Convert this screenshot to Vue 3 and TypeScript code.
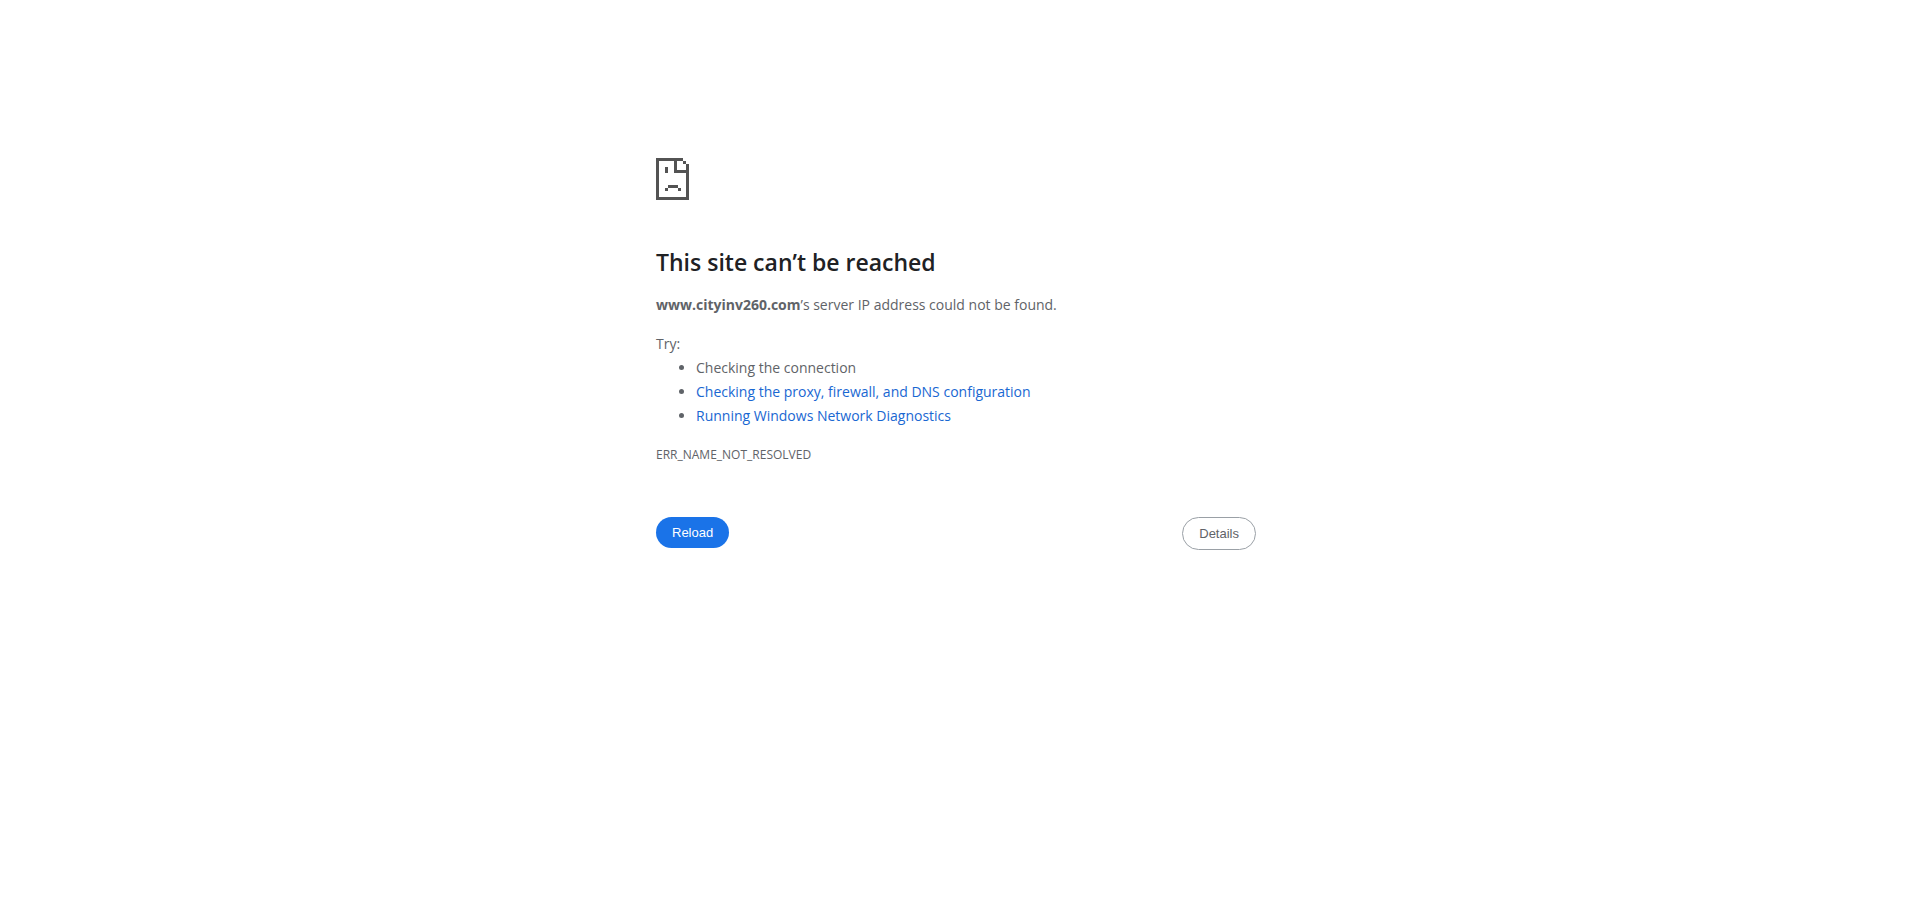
<script setup lang="ts">
import { ref } from 'vue'

interface Suggestion {
  text: string
  link: boolean
}

const host = 'www.cityinv260.com'
const errorCode = 'ERR_NAME_NOT_RESOLVED'
const suggestions: Suggestion[] = [
  { text: 'Checking the connection', link: false },
  { text: 'Checking the proxy, firewall, and DNS configuration', link: true },
  { text: 'Running Windows Network Diagnostics', link: true },
]

const showDetails = ref(false)

function reload(): void {
  window.location.reload()
}
</script>

<template>
  <main class="page">
    <svg class="icon" viewBox="0 0 33 42" shape-rendering="crispEdges" aria-hidden="true">
      <path
        d="M0 0H27V3H21V12H33V42H0ZM3 3V39H30V15H18V3ZM27 3H30V6H27ZM30 6H33V12H30ZM9 9H12V15H9ZM12 27H22V30H12ZM9 30H12V33H9ZM22 30H25V33H22Z"
        fill-rule="evenodd"
      />
    </svg>
    <h1>This site can’t be reached</h1>
    <p class="summary"><strong>{{ host }}</strong>’s server IP address could not be found.</p>
    <div class="suggestions">
      <p>Try:</p>
      <ul>
        <li v-for="item in suggestions" :key="item.text">
          <a v-if="item.link" href="#" @click.prevent="showDetails = true">{{ item.text }}</a>
          <template v-else>{{ item.text }}</template>
        </li>
      </ul>
    </div>
    <p class="code">{{ errorCode }}</p>
    <div class="actions">
      <button class="reload" type="button" @click="reload">Reload</button>
      <button
        class="details"
        type="button"
        :aria-expanded="showDetails"
        @click="showDetails = !showDetails"
      >
        Details
      </button>
    </div>
  </main>
</template>

<style>
body {
  margin: 0;
  background: #fff;
}
</style>

<style scoped>
.page {
  box-sizing: border-box;
  width: 100%;
  max-width: 600px;
  margin: 0 auto;
  padding-top: 158px;
  color: #5f6368;
  font-family: 'Segoe UI', 'Open Sans', 'Noto Sans', sans-serif;
  font-size: 14px;
  line-height: 24px;
}

.icon {
  display: block;
  width: 33px;
  height: 42px;
  fill: #535353;
}

h1 {
  margin: 48px 0 17px;
  color: #202124;
  font-size: 23px;
  font-weight: 600;
  line-height: 28px;
}

p {
  margin: 0;
}

.suggestions {
  margin-top: 15px;
}

ul {
  margin: 0;
  padding-left: 40px;
}

a {
  color: #1967d2;
  text-decoration: none;
}

.code {
  margin-top: 15px;
  font-size: 12px;
}

.actions {
  display: flex;
  align-items: flex-start;
  justify-content: space-between;
  margin-top: 50px;
}

button {
  padding: 8px 16px;
  border: 0;
  border-radius: 20px;
  font-family: 'Liberation Sans', Arial, sans-serif;
  font-size: 13px;
  font-weight: 500;
  line-height: 15px;
  cursor: pointer;
}

.reload {
  background: #1a73e8;
  color: #fff;
}

.details {
  border: 1px solid #9aa0a6;
  background: #fff;
  color: #5f6368;
}
</style>
